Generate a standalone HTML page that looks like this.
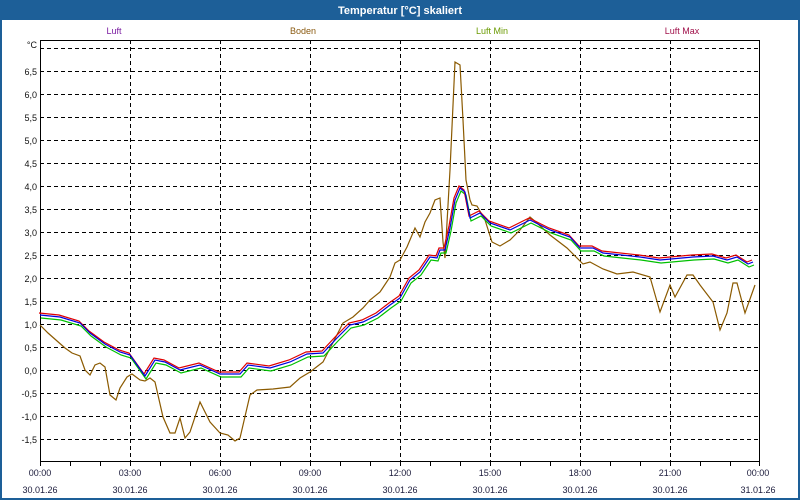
<!DOCTYPE html>
<html><head><meta charset="utf-8"><style>
body{margin:0;width:800px;height:500px;overflow:hidden;background:#fff;font-family:"Liberation Sans",sans-serif}
</style></head><body>
<svg width="800" height="500" xmlns="http://www.w3.org/2000/svg" style="position:absolute;left:0;top:0">
<defs>
<polyline id="luft" points="40,315 60,317 80,323 90,333 105,344 120,352 130,355 145,376 155,360 165,362 180,370 200,365 220,374 240,374 248,365 270,368 290,362 307,354 323,353 337,338 350,325 363,322 377,315 390,305 400,298 410,280 420,272 430,257 437,258 440,250 445,250 450,228 455,200 460,188 465,192 470,218 480,213 490,223 510,230 530,220 550,230 570,237 580,248 593,248 603,253 640,257 660,260 693,257 713,256 727,260 737,257 748,264 753,262"/>
</defs>
<rect x="0" y="0" width="800" height="500" fill="#1d5f98"/>
<rect x="2" y="20" width="796" height="478" fill="#fff"/>
<text x="400" y="14" fill="#fff" font-size="11" font-weight="bold" text-anchor="middle">Temperatur [°C] skaliert</text>
<g font-size="9" text-anchor="middle">
<text x="114" y="34" fill="#7a1aa0">Luft</text>
<text x="303" y="34" fill="#8a5a10">Boden</text>
<text x="492" y="34" fill="#6a9a00">Luft Min</text>
<text x="682" y="34" fill="#a0104a">Luft Max</text>
</g>
<g stroke="#000" stroke-width="1" stroke-dasharray="4,3" shape-rendering="crispEdges">
<line x1="40" y1="48.5" x2="760" y2="48.5"/><line x1="40" y1="71.5" x2="760" y2="71.5"/><line x1="40" y1="94.5" x2="760" y2="94.5"/><line x1="40" y1="117.5" x2="760" y2="117.5"/><line x1="40" y1="140.5" x2="760" y2="140.5"/><line x1="40" y1="163.5" x2="760" y2="163.5"/><line x1="40" y1="186.5" x2="760" y2="186.5"/><line x1="40" y1="209.5" x2="760" y2="209.5"/><line x1="40" y1="232.5" x2="760" y2="232.5"/><line x1="40" y1="255.5" x2="760" y2="255.5"/><line x1="40" y1="278.5" x2="760" y2="278.5"/><line x1="40" y1="301.5" x2="760" y2="301.5"/><line x1="40" y1="324.5" x2="760" y2="324.5"/><line x1="40" y1="347.5" x2="760" y2="347.5"/><line x1="40" y1="370.5" x2="760" y2="370.5"/><line x1="40" y1="393.5" x2="760" y2="393.5"/><line x1="40" y1="416.5" x2="760" y2="416.5"/><line x1="40" y1="439.5" x2="760" y2="439.5"/>
<line x1="130.5" y1="40" x2="130.5" y2="461"/><line x1="220.5" y1="40" x2="220.5" y2="461"/><line x1="310.5" y1="40" x2="310.5" y2="461"/><line x1="400.5" y1="40" x2="400.5" y2="461"/><line x1="490.5" y1="40" x2="490.5" y2="461"/><line x1="580.5" y1="40" x2="580.5" y2="461"/><line x1="670.5" y1="40" x2="670.5" y2="461"/>
</g>
<rect x="40.5" y="40.5" width="719" height="421" fill="none" stroke="#000" shape-rendering="crispEdges"/>
<g stroke="#000" shape-rendering="crispEdges">
<path d="M40.5 461v5M70.5 461v5M100.5 461v5M130.5 461v5M160.5 461v5M190.5 461v5M220.5 461v5M250.5 461v5M280.5 461v5M310.5 461v5M340.5 461v5M370.5 461v5M400.5 461v5M430.5 461v5M460.5 461v5M490.5 461v5M520.5 461v5M550.5 461v5M580.5 461v5M610.5 461v5M640.5 461v5M670.5 461v5M700.5 461v5M730.5 461v5M759.5 461v5"/>
</g>
<g font-size="9" fill="#111" text-anchor="end">
<text x="37" y="48">°C</text>
<text x="37" y="75">6,5</text><text x="37" y="98">6,0</text><text x="37" y="121">5,5</text><text x="37" y="144">5,0</text><text x="37" y="167">4,5</text><text x="37" y="190">4,0</text><text x="37" y="213">3,5</text><text x="37" y="236">3,0</text><text x="37" y="259">2,5</text><text x="37" y="282">2,0</text><text x="37" y="305">1,5</text><text x="37" y="328">1,0</text><text x="37" y="351">0,5</text><text x="37" y="374">0,0</text><text x="37" y="397">-0,5</text><text x="37" y="420">-1,0</text><text x="37" y="443">-1,5</text>
</g>
<g font-size="9" fill="#1a1a3a" text-anchor="middle">
<text x="40" y="476">00:00</text><text x="130" y="476">03:00</text><text x="220" y="476">06:00</text><text x="310" y="476">09:00</text><text x="400" y="476">12:00</text><text x="490" y="476">15:00</text><text x="580" y="476">18:00</text><text x="670" y="476">21:00</text><text x="758" y="476">00:00</text>
<text x="40" y="493">30.01.26</text><text x="130" y="493">30.01.26</text><text x="220" y="493">30.01.26</text><text x="310" y="493">30.01.26</text><text x="400" y="493">30.01.26</text><text x="490" y="493">30.01.26</text><text x="580" y="493">30.01.26</text><text x="670" y="493">30.01.26</text><text x="758" y="493">31.01.26</text>
</g>
<g fill="none" stroke-width="1.2">
<polyline stroke="#8b5a00" points="40,325 48,333 65,348 72,353 80,356 85,370 90,375 95,365 100,363 105,367 110,395 116,400 120,388 127,377 132,374 140,380 145,381 150,378 155,382 163,417 170,433 175,433 180,418 185,438 190,432 200,402 210,422 220,433 228,435 235,441 240,438 250,395 257,390 273,389 290,387 300,378 310,372 323,362 343,323 353,317 363,308 370,300 380,292 390,277 395,263 400,260 407,247 415,228 420,237 425,222 430,213 435,200 440,198 443,242 445,258 450,170 455,62 460,65 463,120 466,180 470,200 472,205 477,206 485,220 492,242 500,246 510,240 520,230 530,217 537,223 550,235 567,248 583,264 590,262 603,269 617,274 633,272 650,277 660,312 670,285 675,297 687,275 693,275 700,285 713,302 720,330 727,313 733,283 737,283 745,313 755,285"/>
<use href="#luft" stroke="#00c000" transform="translate(1,3)"/>
<use href="#luft" stroke="#e00000" transform="translate(-1,-2)"/>
<use href="#luft" stroke="#0000e0"/>
</g>
</svg>
</body></html>
